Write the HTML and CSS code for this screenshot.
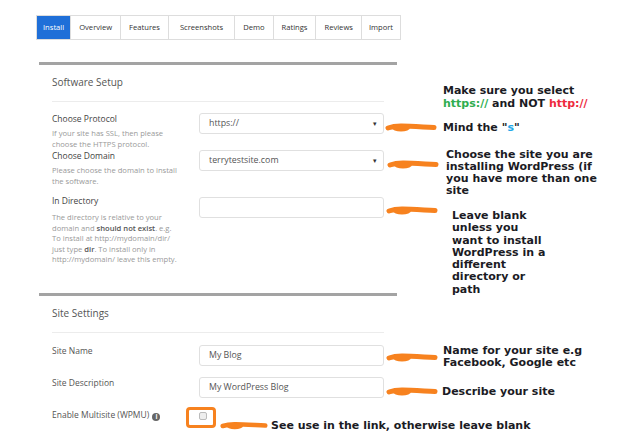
FILE: index.html
```html
<!DOCTYPE html>
<html>
<head>
<meta charset="utf-8">
<link rel="stylesheet" href="styles.css">
</head>
<body>
<div class="page">
  <nav class="tabs">
    <span class="tab active">Install</span>
    <span class="tab">Overview</span>
    <span class="tab">Features</span>
    <span class="tab tab-wide">Screenshots</span>
    <span class="tab">Demo</span>
    <span class="tab">Ratings</span>
    <span class="tab">Reviews</span>
    <span class="tab tab-narrow">Import</span>
  </nav>

  <section class="card card-software">
    <h2 class="card-title">Software Setup</h2>
    <div class="divider"></div>

    <div class="row row-protocol">
      <div class="label-col">
        <div class="label">Choose Protocol</div>
        <div class="help">If your site has SSL, then please choose the HTTPS protocol.</div>
      </div>
      <div class="field select"><span>https://</span><span class="caret">&#9662;</span></div>
    </div>

    <div class="row row-domain">
      <div class="label-col">
        <div class="label">Choose Domain</div>
        <div class="help">Please choose the domain to install the software.</div>
      </div>
      <div class="field select"><span>terrytestsite.com</span><span class="caret">&#9662;</span></div>
    </div>

    <div class="row row-dir">
      <div class="label-col">
        <div class="label">In Directory</div>
        <div class="help help-dir">The directory is relative to your domain and <b>should not exist</b>. e.g. To install at http://mydomain/dir/ just type <b>dir</b>. To install only in http://mydomain/ leave this empty.</div>
      </div>
      <div class="field field-dir"></div>
    </div>
  </section>

  <section class="card card-site">
    <h2 class="card-title">Site Settings</h2>
    <div class="divider"></div>

    <div class="row row-simple row-first">
      <div class="label-col"><div class="label label-light">Site Name</div></div>
      <div class="field">My Blog</div>
    </div>
    <div class="row row-simple">
      <div class="label-col"><div class="label label-light">Site Description</div></div>
      <div class="field">My WordPress Blog</div>
    </div>
    <div class="row row-simple">
      <div class="label-col"><div class="label label-light">Enable Multisite (WPMU) <span class="info">i</span></div></div>
      <div class="check-wrap"><span class="checkbox"></span></div>
    </div>
  </section>

  <!-- Annotation callouts drawn over the screenshot -->
  <svg class="arrow a1" width="52" height="10" viewBox="0 0 52 10"><path d="M3 5 C 12 2, 20 3, 49 4.5" /><ellipse cx="16" cy="5" rx="9" ry="3.4"/></svg>
  <svg class="arrow a2" width="52" height="10" viewBox="0 0 52 10"><path d="M3 5 C 12 2, 20 3, 49 4.5" /><ellipse cx="16" cy="5" rx="9" ry="3.4"/></svg>
  <svg class="arrow a3" width="52" height="10" viewBox="0 0 52 10"><path d="M3 5 C 12 2, 20 3, 49 4.5" /><ellipse cx="16" cy="5" rx="9" ry="3.4"/></svg>
  <svg class="arrow a4" width="52" height="10" viewBox="0 0 52 10"><path d="M3 5 C 12 2, 20 3, 49 4.5" /><ellipse cx="16" cy="5" rx="9" ry="3.4"/></svg>
  <svg class="arrow a5" width="52" height="10" viewBox="0 0 52 10"><path d="M3 5 C 12 2, 20 3, 49 4.5" /><ellipse cx="16" cy="5" rx="9" ry="3.4"/></svg>
  <svg class="arrow a6" width="52" height="10" viewBox="0 0 52 10"><path d="M3 5 C 12 2, 20 3, 49 4.5" /><ellipse cx="16" cy="5" rx="9" ry="3.4"/></svg>
  <div class="ring"></div>

  <div class="note n1">Make sure you select<br><span class="green">https://</span> and NOT <span class="red">http://</span></div>
  <div class="note n2">Mind the "<span class="blue">s</span>"</div>
  <div class="note n3">Choose the site you are<br>installing WordPress (if<br>you have more than one<br>site</div>
  <div class="note n4">Leave blank<br>unless you<br>want to install<br>WordPress in a<br>different<br>directory or<br>path</div>
  <div class="note n5">Name for your site e.g<br>Facebook, Google etc</div>
  <div class="note n6">Describe your site</div>
  <div class="note n7">See use in the link, otherwise leave blank</div>
</div>
</body>
</html>
```

FILE: styles.css
```css
html, body {
  margin: 0;
  padding: 0;
  background: #fff;
}

.page {
  position: relative;
  width: 640px;
  height: 446px;
  overflow: hidden;
  font-family: "Open Sans", "Liberation Sans", sans-serif;
  color: #444;
}

.tabs {
  display: flex;
  margin: 15px 0 0 36px;
  width: max-content;
  border: 1px solid #ddd;
  border-right: none;
}

.tab {
  height: 23px;
  line-height: 23px;
  padding: 0 8px;
  font-size: 7.6px;
  color: #333;
  border-right: 1px solid #ddd;
  background: #fff;
}

.tab.active {
  background: #1f6fd8;
  color: #fff;
  padding: 0 6px;
}

.tab-wide {
  padding: 0 11px;
}

.tab-narrow {
  padding: 0 7px;
}

.card {
  margin-left: 39px;
  width: 332px;
  padding: 0 13px;
  border-top: 3px solid #a3a3a3;
}

.card-software {
  margin-top: 22px;
  padding-bottom: 28px;
}

.card-title {
  margin: 9px 0 0;
  font-size: 10px;
  line-height: 16px;
  font-weight: 400;
  color: #555;
}

.divider {
  margin-top: 11px;
  height: 1px;
  background: #ececec;
}

.row {
  display: flex;
}

.row-protocol { margin-top: 10px; }
.row-domain { margin-top: 0; }
.row-dir { margin-top: 8px; }

.label-col {
  width: 147px;
  flex: none;
}

.label {
  font-size: 8.5px;
  line-height: 14px;
  color: #444;
}

.label-light {
  color: #555;
}

.help {
  margin-top: 2px;
  max-width: 126px;
  font-size: 7.6px;
  line-height: 10.5px;
  color: #999;
}

.help b {
  font-weight: 600;
  color: #555;
}

.help-dir {
  margin-top: 4px;
}

.field {
  box-sizing: border-box;
  width: 185px;
  height: 21px;
  margin-top: 1px;
  padding: 0 9px;
  border: 1px solid #e0e0e0;
  border-radius: 3px;
  font-size: 8.8px;
  line-height: 19px;
  color: #555;
  background: #fff;
}

.select {
  display: flex;
  justify-content: space-between;
}

.caret {
  font-size: 7px;
  color: #333;
  margin-right: -3px;
}

.field-dir {
  margin-top: 3px;
}

.card-site {
  padding-bottom: 30px;
}

.row-simple {
  margin-top: 10px;
}

.row-simple .field {
  margin-top: 1px;
}

.row-first {
  margin-top: 11px;
}

.info {
  display: inline-block;
  width: 8px;
  height: 8px;
  line-height: 8px;
  border-radius: 50%;
  background: #666;
  color: #fff;
  font-size: 6.5px;
  font-weight: 700;
  text-align: center;
  vertical-align: -1px;
  margin-left: 1px;
}

.check-wrap {
  padding-top: 4px;
  padding-left: 0;
}

.checkbox {
  display: block;
  width: 6px;
  height: 6px;
  border: 1px solid #bbb;
  border-radius: 2px;
  background: #eee;
}

/* annotations */
.arrow {
  position: absolute;
  overflow: visible;
}

.arrow path {
  fill: none;
  stroke: #f7821f;
  stroke-width: 5;
  stroke-linecap: round;
}

.arrow ellipse {
  fill: #f7821f;
}

.a1 { left: 385px; top: 123px; }
.a2 { left: 387px; top: 160px; }
.a3 { left: 386px; top: 206px; }
.a4 { left: 386px; top: 353px; }
.a5 { left: 386px; top: 387px; }
.a6 { left: 220px; top: 421px; width: 48px; }

.ring {
  position: absolute;
  left: 186px;
  top: 407px;
  width: 24px;
  height: 15px;
  border: 3px solid #f7821f;
  border-radius: 4px;
}

.note {
  position: absolute;
  font-family: "DejaVu Sans", Verdana, sans-serif;
  font-weight: 700;
  font-size: 11px;
  line-height: 12.3px;
  color: #1b1b24;
  white-space: nowrap;
}

.green { color: #2fae4f; }
.red { color: #ee2a3d; }
.blue { color: #22a7e8; }

.n1 { left: 443px; top: 84px; line-height: 13px; }
.n2 { left: 443px; top: 122px; }
.n3 { left: 446px; top: 149px; line-height: 12px; }
.n4 { left: 452px; top: 210px; }
.n5 { left: 443px; top: 345px; }
.n6 { left: 442px; top: 386px; }
.n7 { left: 271px; top: 420px; }
```
